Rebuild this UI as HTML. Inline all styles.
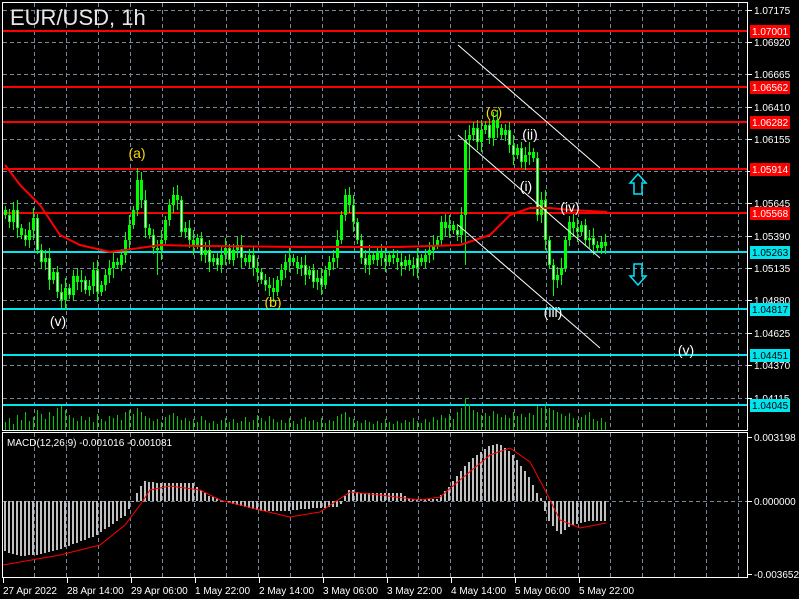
<!DOCTYPE html>
<html><head><meta charset="utf-8"><style>
html,body{margin:0;padding:0;background:#000;width:799px;height:599px;overflow:hidden}
svg{display:block}
text{font-family:"Liberation Sans",sans-serif}
</style></head><body>
<svg width="799" height="599" xmlns="http://www.w3.org/2000/svg">
<rect width="799" height="599" fill="#000"/>
<g stroke="#778899" stroke-width="1" stroke-dasharray="4,3">
<path d="M34.5 3V430M66.5 3V430M98.5 3V430M130.5 3V430M162.5 3V430M194.5 3V430M226.5 3V430M258.5 3V430M290.5 3V430M322.5 3V430M354.5 3V430M386.5 3V430M418.5 3V430M450.5 3V430M482.5 3V430M514.5 3V430M546.5 3V430M578.5 3V430M610.5 3V430M642.5 3V430M674.5 3V430M706.5 3V430M738.5 3V430"/>
<path d="M34.5 433V577M66.5 433V577M98.5 433V577M130.5 433V577M162.5 433V577M194.5 433V577M226.5 433V577M258.5 433V577M290.5 433V577M322.5 433V577M354.5 433V577M386.5 433V577M418.5 433V577M450.5 433V577M482.5 433V577M514.5 433V577M546.5 433V577M578.5 433V577M610.5 433V577M642.5 433V577M674.5 433V577M706.5 433V577M738.5 433V577"/>
<path d="M3 10.5H747M3 42.5H747M3 74.5H747M3 107.5H747M3 139.5H747M3 171.5H747M3 203.5H747M3 236.5H747M3 268.5H747M3 300.5H747M3 333.5H747M3 365.5H747M3 398.5H747M3 501.5H747"/>
</g>
<g stroke-width="2">
<path d="M3 31H747M3 87H747M3 122H747M3 169H747M3 213H747" stroke="#ff0000"/>
<path d="M3 252H747M3 309H747M3 355H747M3 405H747" stroke="#00e5ee"/>
</g>
<!-- volume -->
<path stroke="#00cc00" stroke-width="1" d="M5.5 430v-8M9.5 430v-12M13.5 430v-6M17.5 430v-15M21.5 430v-10M25.5 430v-18M29.5 430v-9M33.5 430v-13M37.5 430v-20M41.5 430v-16M45.5 430v-11M49.5 430v-18M53.5 430v-14M57.5 430v-22M61.5 430v-24M65.5 430v-20M69.5 430v-15M73.5 430v-12M77.5 430v-9M81.5 430v-14M85.5 430v-10M89.5 430v-13M93.5 430v-8M97.5 430v-16M101.5 430v-11M105.5 430v-9M109.5 430v-14M113.5 430v-12M117.5 430v-15M121.5 430v-10M125.5 430v-18M129.5 430v-20M133.5 430v-16M137.5 430v-22M141.5 430v-18M145.5 430v-14M149.5 430v-12M153.5 430v-9M157.5 430v-11M161.5 430v-8M165.5 430v-13M169.5 430v-15M173.5 430v-17M177.5 430v-14M181.5 430v-10M185.5 430v-12M189.5 430v-9M193.5 430v-11M197.5 430v-8M201.5 430v-14M205.5 430v-10M209.5 430v-7M213.5 430v-9M217.5 430v-6M221.5 430v-10M225.5 430v-12M229.5 430v-8M233.5 430v-11M237.5 430v-7M241.5 430v-9M245.5 430v-13M249.5 430v-8M253.5 430v-10M257.5 430v-15M261.5 430v-12M265.5 430v-9M269.5 430v-14M273.5 430v-11M277.5 430v-8M281.5 430v-10M285.5 430v-7M289.5 430v-12M293.5 430v-9M297.5 430v-6M301.5 430v-11M305.5 430v-13M309.5 430v-9M313.5 430v-10M317.5 430v-8M321.5 430v-12M325.5 430v-7M329.5 430v-10M333.5 430v-9M337.5 430v-14M341.5 430v-16M345.5 430v-18M349.5 430v-13M353.5 430v-11M357.5 430v-9M361.5 430v-7M365.5 430v-10M369.5 430v-8M373.5 430v-6M377.5 430v-9M381.5 430v-7M385.5 430v-11M389.5 430v-8M393.5 430v-6M397.5 430v-9M401.5 430v-7M405.5 430v-10M409.5 430v-8M413.5 430v-12M417.5 430v-9M421.5 430v-7M425.5 430v-11M429.5 430v-8M433.5 430v-13M437.5 430v-10M441.5 430v-15M445.5 430v-12M449.5 430v-16M453.5 430v-11M457.5 430v-18M461.5 430v-22M465.5 430v-32M469.5 430v-26M473.5 430v-20M477.5 430v-18M481.5 430v-15M485.5 430v-17M489.5 430v-14M493.5 430v-19M497.5 430v-16M501.5 430v-13M505.5 430v-15M509.5 430v-12M513.5 430v-18M517.5 430v-14M521.5 430v-16M525.5 430v-13M529.5 430v-17M533.5 430v-15M537.5 430v-24M541.5 430v-22M545.5 430v-25M549.5 430v-22M553.5 430v-20M557.5 430v-18M561.5 430v-16M565.5 430v-14M569.5 430v-17M573.5 430v-12M577.5 430v-10M581.5 430v-13M585.5 430v-15M589.5 430v-18M593.5 430v-11M597.5 430v-9M601.5 430v-12M605.5 430v-8"/>
<!-- candle wicks -->
<path stroke="#00ff00" stroke-width="1" d="M5.5 206V219M9.5 209V228M13.5 202V230M17.5 200V238M21.5 224V239M25.5 229V246M29.5 222V248M33.5 208V240M37.5 214V254M41.5 244V268M45.5 250V270M49.5 248V290M53.5 268V284M57.5 266V298M61.5 284V308M65.5 278V310M69.5 284V299M73.5 270V301M77.5 268V290M81.5 270V292M85.5 276V294M89.5 280V296M93.5 262V294M97.5 260V302M101.5 281V296M105.5 269V291M109.5 260V283M113.5 252V278M117.5 258V269M121.5 249V271M125.5 232V263M129.5 215V250M133.5 206V229M137.5 168V216M141.5 172V208M145.5 190V238M149.5 224V239M153.5 229V254M157.5 240V275M161.5 230V260M165.5 216V244M169.5 199V226M173.5 187V213M177.5 185V210M181.5 196V236M185.5 222V238M189.5 220V248M193.5 230V255M197.5 234V249M201.5 232V261M205.5 242V263M209.5 240V272M213.5 254V266M217.5 252V271M221.5 247V273M225.5 238V265M229.5 244V264M233.5 244V266M237.5 237V258M241.5 235V268M245.5 254V266M249.5 249V268M253.5 247V276M257.5 258V282M261.5 268V284M265.5 274V291M269.5 277V296M273.5 278V302M277.5 276V296M281.5 264V286M285.5 254V278M289.5 248V272M293.5 254V266M297.5 256V274M301.5 257V276M305.5 255V285M309.5 266V279M313.5 264V288M317.5 270V290M321.5 268V295M325.5 266V289M329.5 256V276M333.5 250V270M337.5 230V268M341.5 211V244M345.5 189V221M349.5 187V213M353.5 195V232M357.5 218V244M361.5 234V264M365.5 250V273M369.5 245V275M373.5 251V264M377.5 246V266M381.5 244V266M385.5 248V272M389.5 251V266M393.5 249V264M397.5 250V270M401.5 252V276M405.5 256V270M409.5 254V271M413.5 257V276M417.5 248V278M421.5 254V266M425.5 249V268M429.5 242V263M433.5 235V260M437.5 236V249M441.5 216V246M445.5 214V236M449.5 215V238M453.5 221V234M457.5 224V241M461.5 207V243M465.5 130V265M469.5 125V170M473.5 122V141M477.5 120V150M481.5 120V152M485.5 121V134M489.5 119V144M493.5 112V146M497.5 110V138M501.5 124V139M505.5 124V141M509.5 122V153M513.5 135V165M517.5 144V159M521.5 142V168M525.5 147V170M529.5 142V165M533.5 148V162M537.5 152V221M541.5 192V223M545.5 190V250M549.5 236V269M553.5 259V296M557.5 267V288M561.5 258V285M565.5 236V272M569.5 216V246M573.5 214V236M577.5 218V242M581.5 221V236M585.5 219V246M589.5 230V248M593.5 228V255M597.5 241V252M601.5 236V254M605.5 234V254"/>
<!-- candle bodies -->
<path stroke="#00ff00" stroke-width="3" d="M5.5 210V215M9.5 215V222M13.5 210V222M17.5 210V228M21.5 228V235M25.5 235V240M29.5 230V240M33.5 218V230M37.5 218V250M41.5 250V262M45.5 258V262M49.5 258V280M53.5 272V280M57.5 272V292M61.5 292V300M65.5 288V300M69.5 288V295M73.5 276V295M77.5 276V282M81.5 280V282M85.5 280V290M89.5 286V290M93.5 270V286M97.5 270V292M101.5 285V292M105.5 275V285M109.5 268V275M113.5 262V268M117.5 262V265M121.5 255V265M125.5 240V255M129.5 225V240M133.5 210V225M137.5 180V210M141.5 180V200M145.5 200V228M149.5 228V235M153.5 235V248M157.5 248V250M161.5 240V250M165.5 220V240M169.5 205V220M173.5 195V205M177.5 195V200M181.5 200V232M185.5 228V232M189.5 228V240M193.5 240V245M197.5 238V245M201.5 238V255M205.5 250V255M209.5 250V262M213.5 258V262M217.5 258V265M221.5 255V265M225.5 248V255M229.5 248V260M233.5 250V260M237.5 245V250M241.5 245V258M245.5 258V262M249.5 255V262M253.5 255V268M257.5 268V272M261.5 272V280M265.5 280V285M269.5 285V288M273.5 288V292M277.5 280V292M281.5 270V280M285.5 262V270M289.5 258V262M293.5 258V262M297.5 262V268M301.5 265V268M305.5 265V275M309.5 270V275M313.5 270V282M317.5 278V282M321.5 278V285M325.5 270V285M329.5 262V270M333.5 258V262M337.5 240V258M341.5 215V240M345.5 195V215M349.5 195V205M353.5 205V222M357.5 222V240M361.5 240V258M365.5 258V265M369.5 255V265M373.5 255V260M377.5 252V260M381.5 252V258M385.5 258V262M389.5 255V262M393.5 255V258M397.5 258V262M401.5 262V266M405.5 260V266M409.5 260V265M413.5 265V268M417.5 258V268M421.5 258V262M425.5 255V262M429.5 250V255M433.5 245V250M437.5 240V245M441.5 222V240M445.5 222V228M449.5 225V228M453.5 225V230M457.5 230V235M461.5 215V235M465.5 140V215M469.5 135V140M473.5 128V135M477.5 128V142M481.5 130V142M485.5 125V130M489.5 125V138M493.5 120V138M497.5 120V128M501.5 128V135M505.5 130V135M509.5 130V145M513.5 145V155M517.5 148V155M521.5 148V162M525.5 155V162M529.5 152V155M533.5 152V158M537.5 158V215M541.5 200V215M545.5 200V240M549.5 240V265M553.5 265V280M557.5 275V280M561.5 268V275M565.5 240V268M569.5 222V240M573.5 222V228M577.5 228V232M581.5 225V232M585.5 225V240M589.5 238V240M593.5 238V245M597.5 245V248M601.5 242V248M605.5 242V246"/>
<path stroke="#ffffff" stroke-width="1" d="M9.5 216V221M17.5 211V227M25.5 236V239M37.5 219V249M41.5 251V261M49.5 259V279M57.5 273V291M61.5 293V299M69.5 289V294M85.5 281V289M97.5 271V291M153.5 236V247M145.5 201V227M181.5 201V231M189.5 229V239M201.5 239V254M209.5 251V261M217.5 259V264M229.5 249V259M241.5 246V257M253.5 256V267M261.5 273V279M265.5 281V284M305.5 266V274M313.5 271V281M321.5 279V284M353.5 206V221M357.5 223V239M361.5 241V257M365.5 259V264M385.5 259V261M401.5 263V265M417.5 259V267M457.5 231V234M477.5 129V141M489.5 126V137M509.5 131V144M513.5 146V154M521.5 149V161M537.5 159V214M545.5 201V239M549.5 241V264M553.5 266V279M577.5 229V231M585.5 226V239M593.5 239V244"/>
<!-- MA -->
<polyline fill="none" stroke="#ff0000" stroke-width="2" points="5,165 20,185 40,205 60,235 80,245 110,252 140,248 160,245 200,246 300,247 400,247 460,245 490,235 510,215 530,208 550,208 570,210 607,212"/>
<!-- MACD histogram -->
<path stroke="#c0c0c0" stroke-width="2" d="M5 501v50M9 501v52M13 501v53M17 501v54M21 501v55M25 501v55M29 501v54M33 501v54M37 501v54M41 501v53M45 501v52M49 501v51M53 501v50M57 501v49M61 501v48M65 501v46M69 501v45M73 501v43M77 501v42M81 501v40M85 501v39M89 501v37M93 501v36M97 501v34M101 501v31M105 501v28M109 501v26M113 501v23M117 501v20M121 501v17M125 501v15M129 501v8M133 501v1M137 501v-8M141 501v-15M145 501v-20M149 501v-19M153 501v-19M157 501v-18M161 501v-18M165 501v-18M169 501v-18M173 501v-18M177 501v-18M181 501v-18M185 501v-18M189 501v-18M193 501v-18M197 501v-14M201 501v-11M205 501v-8M209 501v-5M213 501v-4M217 501v-3M221 501v-1M229 501v2M233 501v3M237 501v4M241 501v5M245 501v6M249 501v7M253 501v8M257 501v9M261 501v10M265 501v10M269 501v10M273 501v10M277 501v10M281 501v10M285 501v10M289 501v10M293 501v9M297 501v9M301 501v8M305 501v8M309 501v8M313 501v7M317 501v7M321 501v7M325 501v7M329 501v6M333 501v6M337 501v6M341 501v3M345 501v-5M349 501v-11M353 501v-11M357 501v-9M361 501v-8M365 501v-8M369 501v-8M373 501v-8M377 501v-8M381 501v-8M385 501v-8M389 501v-8M393 501v-8M397 501v-8M401 501v-8M405 501v-5M409 501v-3M413 501v-2M417 501v-2M421 501v-2M425 501v-2M429 501v-2M433 501v-2M437 501v-2M441 501v-6M445 501v-10M449 501v-14M453 501v-20M457 501v-25M461 501v-30M465 501v-35M469 501v-39M473 501v-43M477 501v-46M481 501v-49M485 501v-52M489 501v-55M493 501v-56M497 501v-57M501 501v-56M505 501v-53M509 501v-50M513 501v-46M517 501v-41M521 501v-35M525 501v-30M529 501v-24M533 501v-16M537 501v-8M541 501v-3M545 501v10M549 501v20M553 501v25M557 501v30M561 501v33M565 501v29M569 501v26M573 501v24M577 501v23M581 501v22M585 501v21M589 501v20M593 501v20M597 501v20M601 501v20M605 501v20"/>
<polyline fill="none" stroke="#ff0000" stroke-width="1" points="3,565 60,555 100,545 125,525 140,505 150,490 170,486 200,490 220,500 260,510 290,517 320,512 350,492 380,495 420,500 440,497 460,480 490,455 510,448 530,462 545,490 560,520 580,528 606,523"/>
<g stroke="#fff" stroke-width="1">
<line x1="458" y1="45" x2="600" y2="168"/>
<line x1="458" y1="135" x2="600" y2="258"/>
<line x1="458" y1="225" x2="600" y2="348"/>
</g>
<g fill="none" stroke="#fff" stroke-width="1">
<rect x="2.5" y="2.5" width="745" height="428"/>
<rect x="2.5" y="432.5" width="745" height="145"/>
</g>
<text x="10" y="25" font-size="22" fill="#e8e8e8">EUR/USD, 1h</text>
<text x="7" y="446" font-size="10" fill="#fff">MACD(12,26,9) -0.001016 -0.001081</text>
<g font-size="14" text-anchor="middle">
<text x="137" y="158" fill="#ffd700">(a)</text>
<text x="273" y="307" fill="#ffd700">(b)</text>
<text x="494" y="117" fill="#ffd700">(c)</text>
<text x="58" y="326" fill="#fff">(v)</text>
<text x="526" y="191" fill="#fff">(i)</text>
<text x="530" y="139" fill="#fff">(ii)</text>
<text x="553" y="317" fill="#fff">(iii)</text>
<text x="570" y="212" fill="#fff">(iv)</text>
<text x="686" y="355" fill="#fff">(v)</text>
</g>
<g fill="none" stroke="#00e5ff" stroke-width="1.5">
<path d="M638,174 L646,183 L642,183 L642,194 L634,194 L634,183 L630,183 Z"/>
<path d="M638,285 L646,276 L642,276 L642,264 L634,264 L634,276 L630,276 Z"/>
</g>
<!-- axis -->
<path stroke="#fff" stroke-width="1" d="M747 10.5h5M747 42.5h5M747 74.5h5M747 107.5h5M747 139.5h5M747 171.5h5M747 203.5h5M747 236.5h5M747 268.5h5M747 300.5h5M747 333.5h5M747 365.5h5M747 398.5h5M747 437.5h5M747 501.5h5M747 574.5h5M3.5 578v5M67.5 578v5M131.5 578v5M195.5 578v5M259.5 578v5M323.5 578v5M387.5 578v5M451.5 578v5M515.5 578v5M579.5 578v5"/>
<g font-size="10" fill="#fff">
<text x="754" y="14">1.07175</text><text x="754" y="46">1.06920</text><text x="754" y="78">1.06665</text><text x="754" y="111">1.06410</text><text x="754" y="143">1.06155</text><text x="754" y="207">1.05645</text><text x="754" y="240">1.05390</text><text x="754" y="272">1.05135</text><text x="754" y="304">1.04880</text><text x="754" y="337">1.04625</text><text x="754" y="369">1.04370</text><text x="754" y="402">1.04115</text>
<text x="754" y="441">0.003198</text><text x="754" y="505">0.000000</text><text x="754" y="578">-0.003652</text>
<text x="3" y="594">27 Apr 2022</text><text x="67" y="594">28 Apr 14:00</text><text x="131" y="594">29 Apr 06:00</text><text x="195" y="594">1 May 22:00</text><text x="259" y="594">2 May 14:00</text><text x="323" y="594">3 May 06:00</text><text x="387" y="594">3 May 22:00</text><text x="451" y="594">4 May 14:00</text><text x="515" y="594">5 May 06:00</text><text x="579" y="594">5 May 22:00</text>
</g>
<g fill="#ff0000"><rect x="750" y="25" width="40" height="13"/><rect x="750" y="81" width="40" height="13"/><rect x="750" y="116" width="40" height="13"/><rect x="750" y="163" width="40" height="13"/><rect x="750" y="207" width="40" height="13"/></g>
<g fill="#00e5ee"><rect x="750" y="246" width="40" height="13"/><rect x="750" y="303" width="40" height="13"/><rect x="750" y="349" width="40" height="13"/><rect x="750" y="399" width="40" height="13"/></g>
<g font-size="10">
<text x="752" y="35" fill="#fff">1.07001</text><text x="752" y="91" fill="#fff">1.06562</text><text x="752" y="126" fill="#fff">1.06282</text><text x="752" y="173" fill="#fff">1.05914</text><text x="752" y="217" fill="#fff">1.05568</text>
<text x="752" y="256" fill="#000">1.05263</text><text x="752" y="313" fill="#000">1.04817</text><text x="752" y="359" fill="#000">1.04451</text><text x="752" y="409" fill="#000">1.04045</text>
</g>
</svg>
</body></html>
